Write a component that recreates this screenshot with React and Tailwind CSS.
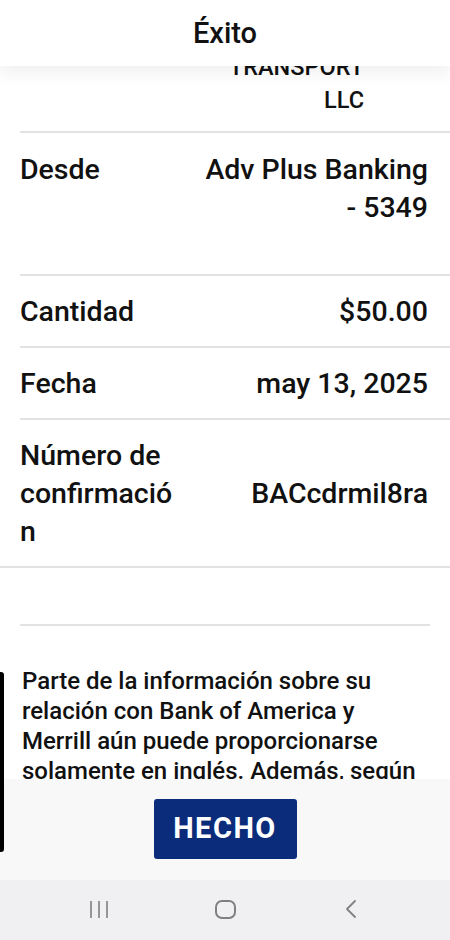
import React from 'react';

const rows = [
  { label: 'Desde', value: ['Adv Plus Banking', '- 5349'], pad: 'pt-[18px] pb-[47px]' },
  { label: 'Cantidad', value: ['$50.00'], pad: 'pt-[17px] pb-[15px]' },
  { label: 'Fecha', value: ['may 13, 2025'], pad: 'pt-[17px] pb-[15px]' },
];

const App = () => {
  return (
    <div className="relative flex h-[940px] w-[450px] flex-col overflow-hidden bg-white font-medium text-[#111] font-['Roboto',sans-serif]">
      {/* Cabecera */}
      <header className="relative z-10 flex h-[66px] shrink-0 items-center justify-center bg-white shadow-[0_8px_16px_rgba(0,0,0,0.06)]">
        <h1 className="text-[29px] leading-none">Éxito</h1>
      </header>

      {/* Contenido desplazado */}
      <main className="flex-1 overflow-hidden">
        <div className="-mt-[15px]">
          <div className="ml-5 border-b-2 border-[#e2e2e2] pr-[86px] pb-[14px] text-right text-[23.5px] leading-[33px]">
            <div>TRANSPORT</div>
            <div>LLC</div>
          </div>

          {rows.map((row, i) => (
            <div
              key={i}
              className={`ml-5 flex justify-between border-b-2 border-[#e2e2e2] pr-[22px] text-[28.5px] leading-[38px] ${row.pad}`}
            >
              <div>{row.label}</div>
              <div className="text-right">
                {row.value.map((v, j) => (
                  <div key={j}>{v}</div>
                ))}
              </div>
            </div>
          ))}

          <div className="flex items-center justify-between border-b-2 border-[#e2e2e2] pt-[17px] pb-[15px] pl-5 pr-[22px] text-[28.5px] leading-[38px]">
            <div className="w-[162px] [overflow-wrap:anywhere]">Número de confirmación</div>
            <div>BACcdrmil8ra</div>
          </div>

          <div className="mx-5 mt-[56px] border-b-2 border-[#e2e2e2]"></div>

          <p className="mt-[40px] pl-[22px] pr-[10px] text-[24px] leading-[30px]">
            Parte de la información sobre su
            <br />
            relación con Bank of America y
            <br />
            Merrill aún puede proporcionarse
            <br />
            solamente en inglés. Además, según
            <br />
            nuestras políticas, algunos documentos pueden estar disponibles solo en inglés.
          </p>
        </div>
      </main>

      {/* Botón */}
      <div className="flex h-[101px] shrink-0 items-start justify-center bg-[#f8f8f8] pt-[20px]">
        <button className="flex h-[60px] w-[143px] items-center justify-center rounded-[3px] bg-[#0b2b7b] text-[29px] font-bold tracking-[1.5px] text-white">
          HECHO
        </button>
      </div>

      {/* Barra de navegación */}
      <nav className="flex h-[60px] shrink-0 items-center justify-center bg-[#f0f0f2] pb-[2px]">
        <div className="grid w-[378px] grid-cols-3 place-items-center">
          <svg width="20" height="19" viewBox="0 0 20 19" fill="none" stroke="#808080" strokeWidth="1.6">
            <path d="M2 1v17M10 1v17M18 1v17" />
          </svg>
          <div className="h-[19px] w-[21px] rounded-[7px] border-2 border-[#808080]"></div>
          <svg width="14" height="20" viewBox="0 0 14 20" fill="none" stroke="#808080" strokeWidth="1.8" strokeLinecap="round" strokeLinejoin="round">
            <path d="M11 2 3 10l8 8" />
          </svg>
        </div>
      </nav>

      {/* Barra de desplazamiento */}
      <div className="absolute left-0 top-[672px] h-[180px] w-[4px] rounded-r-[3px] bg-black"></div>
    </div>
  );
};

export default App;
